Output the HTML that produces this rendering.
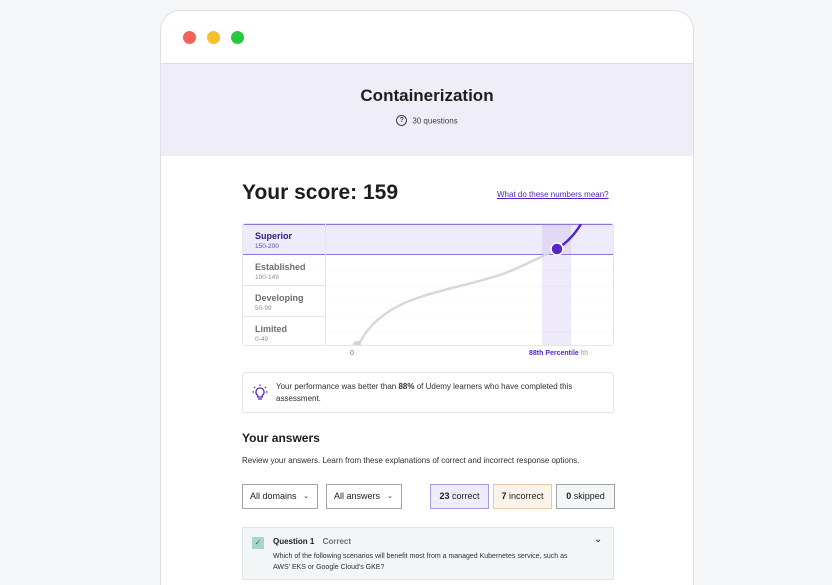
<!DOCTYPE html>
<html style="width:832px;height:585px;overflow:hidden"><head><meta charset="utf-8"><style>
*{margin:0;padding:0;box-sizing:border-box}
body{width:832px;height:585px;background:#f5f6f8;font-family:"Liberation Sans",sans-serif;color:#1c1d1f;position:relative;overflow:hidden}
.win{position:absolute;left:160px;top:10px;width:534px;height:575px;background:#fff;border:1px solid #dcdfe3;border-bottom:none;border-radius:20px 20px 0 0;overflow:hidden}
.dot{position:absolute;top:20px;width:13px;height:13px;border-radius:50%}
.hdr{position:absolute;left:0;top:52px;width:100%;height:93px;background:#efeef8;border-top:1px solid #d9dbe0;text-align:center}
.abs{position:absolute}
.lbl{position:absolute;left:0;width:82px;border-bottom:1px solid #e4e6ea;padding:7px 0 0 12px;font-size:9px;font-weight:bold;color:#6a6f73}
.lbl small{display:block;font-size:6.5px;font-weight:normal;color:#8a8f93;margin-top:2px}
.btn{position:absolute;top:484px;height:25px;border:1px solid #9da3a7;font-size:9px;line-height:23px;padding-left:7px;background:#fff}
</style></head><body>
<div class="win">
<div class="dot" style="left:22px;background:#f5625a"></div>
<div class="dot" style="left:46px;background:#f4c02b"></div>
<div class="dot" style="left:70px;background:#27c840"></div>
<div class="hdr">
<div style="font-size:17px;font-weight:bold;margin-top:22px">Containerization</div>
<div style="font-size:8px;color:#3e4143;margin-top:9px;line-height:11px"><span style="display:inline-block;width:11px;height:11px;border:1.2px solid #3e4143;border-radius:50%;font-size:7px;line-height:9px;font-weight:bold;vertical-align:middle;margin-right:5px">?</span><span style="vertical-align:middle">30 questions</span></div>
</div>
</div>
<div class="abs" style="left:242px;top:181px;font-size:21px;font-weight:bold">Your score: 159</div>
<div class="abs" style="left:497px;top:190px;font-size:8px;color:#5022c3;text-decoration:underline">What do these numbers mean?</div>
<div class="abs" style="left:242px;top:223px;width:372px;height:123px;border:1px solid #e4e6ea;border-radius:3px;overflow:hidden">
<div class="abs" style="left:0;top:0;width:372px;height:31px;background:#eeecfc;border-top:1px solid #8d73e0;border-bottom:1px solid #8d73e0"></div>
<svg class="abs" style="left:82px;top:0" width="290" height="123"><g stroke="#f7f8f9" stroke-width="1"><line x1="0" y1="46" x2="290" y2="46"/><line x1="0" y1="62" x2="290" y2="62"/><line x1="0" y1="77" x2="290" y2="77"/><line x1="0" y1="93" x2="290" y2="93"/><line x1="0" y1="108" x2="290" y2="108"/></g></svg>
<div class="abs" style="left:299px;top:0;width:29px;height:123px;background:rgba(160,140,230,0.18)"></div>
<div class="abs" style="left:82px;top:0;width:1px;height:123px;background:#e4e6ea"></div>
<div class="lbl" style="top:0;height:31px;color:#2d1d7a;border:none">Superior<small style="color:#5c4aa0">150-200</small></div>
<div class="lbl" style="top:31px;height:31px">Established<small>100-149</small></div>
<div class="lbl" style="top:62px;height:31px">Developing<small>50-99</small></div>
<div class="lbl" style="top:93px;height:30px;border:none">Limited<small>0-49</small></div>
<svg class="abs" style="left:0;top:0" width="372" height="123">
<path d="M115 122 C140 70 200 70 260 50 C285 40 300 32 314 25" stroke="#d5d8dc" stroke-width="2.5" fill="none"/>
<path d="M314 25 C325 18 332 10 338 0" stroke="#5624d0" stroke-width="2.5" fill="none"/>
<circle cx="114" cy="121" r="4" fill="#d1d4d8"/>
<circle cx="314" cy="25" r="6" fill="#5624d0" stroke="#fff" stroke-width="1.5"/>
</svg>
</div>
<div class="abs" style="left:350px;top:350px;font-size:7px;color:#6a6f73">0</div>
<div class="abs" style="left:529px;top:350px;font-size:7px;color:#5624d0;font-weight:bold">88th Percentile <span style="color:#9da3a7;font-weight:normal">lth</span></div>
<div class="abs" style="left:242px;top:372px;width:372px;height:41px;border:1px solid #e4e6ea;border-radius:3px">
<svg class="abs" style="left:9px;top:11px" width="16" height="18" viewBox="0 0 16 18" fill="none" stroke="#5624d0" stroke-width="1.3"><path d="M8 4a4 4 0 0 0-2.3 7.3V13h4.6v-1.7A4 4 0 0 0 8 4z"/><path d="M6 15h4"/><path d="M8 0.5v1.5M2 3l1 1M14 3l-1 1M0.5 8h1.5M14 8h1.5"/></svg>
<div class="abs" style="left:33px;top:8px;width:330px;font-size:8px;line-height:12px;color:#2d2f31">Your performance was better than <b>88%</b> of Udemy learners who have completed this assessment.</div>
</div>
<div class="abs" style="left:242px;top:431px;font-size:12px;font-weight:bold">Your answers</div>
<div class="abs" style="left:242px;top:456px;font-size:8px;color:#2d2f31">Review your answers. Learn from these explanations of correct and incorrect response options.</div>
<div class="btn" style="left:242px;width:76px">All domains <span style="float:right;margin-right:8px;font-size:7px">&#8964;</span></div>
<div class="btn" style="left:326px;width:76px">All answers <span style="float:right;margin-right:8px;font-size:7px">&#8964;</span></div>
<div class="btn" style="left:430px;width:59px;background:#efecfb;border-color:#a898e6;text-align:center;padding:0"><b>23</b> correct</div>
<div class="btn" style="left:493px;width:59px;background:#fcf4ea;border-color:#e6c9a0;text-align:center;padding:0"><b>7</b> incorrect</div>
<div class="btn" style="left:556px;width:59px;background:#f4f6f7;border-color:#9da3a7;text-align:center;padding:0"><b>0</b> skipped</div>
<div class="abs" style="left:242px;top:527px;width:372px;height:53px;background:#f3f6f7;border:1px solid #e4e6ea">
<div class="abs" style="left:9px;top:9px;width:12px;height:12px;background:#a8d6cc;color:#3b6b60;font-size:8px;text-align:center;line-height:12px">&#10003;</div>
<div class="abs" style="left:30px;top:9px;font-size:8px;font-weight:bold">Question 1 <span style="color:#6a6f73;margin-left:6px">Correct</span></div>
<div class="abs" style="left:30px;top:23px;width:310px;font-size:7px;line-height:11px;color:#2d2f31">Which of the following scenarios will benefit most from a managed Kubernetes service, such as AWS' EKS or Google Cloud's GKE?</div>
<div class="abs" style="left:351px;top:6px;font-size:10px">&#8964;</div>
</div>
</body></html>
